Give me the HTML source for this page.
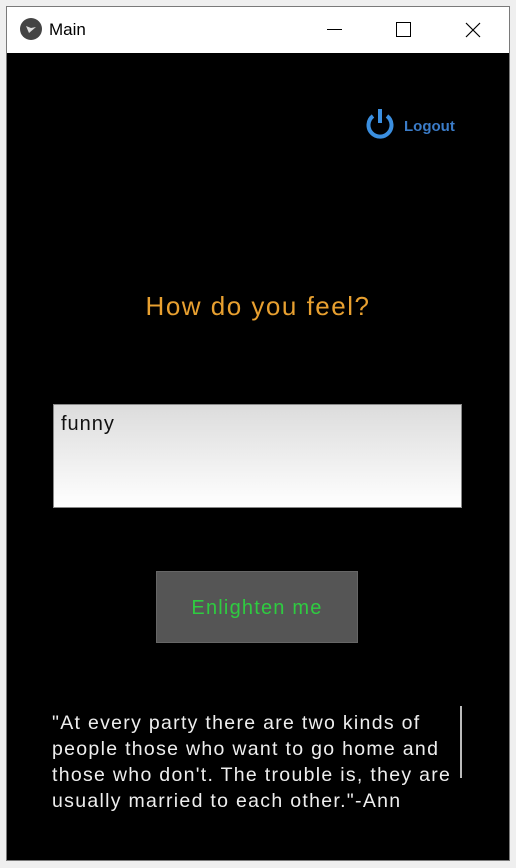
<!DOCTYPE html>
<html><head><style>
body{margin:0;width:516px;height:868px;background:#efefef;position:relative;overflow:hidden;font-family:"Liberation Sans",sans-serif}
.win{position:absolute;left:6px;top:6px;width:502px;height:853px;border:1px solid #7a7a7a;background:#fff}
.tb{position:absolute;left:0;top:0;width:502px;height:46px;background:#fff}
.content{position:absolute;left:0;top:46px;width:502px;height:807px;background:#000}
.abs{position:absolute}
</style></head><body>
<div class="win">
<div class="tb">
<svg class="abs" style="left:13px;top:11px" width="22" height="22"><circle cx="11" cy="11" r="11" fill="#444"/><path d="M6 8 L9 15 L16 9 L11 10 Z" fill="#ddd"/></svg>
<div class="abs" style="left:42px;top:13px;font-size:17px;color:#000">Main</div>
<div class="abs" style="left:320px;top:22px;width:15px;height:1px;background:#000"></div>
<div class="abs" style="left:389px;top:15px;width:13px;height:13px;border:1px solid #000"></div>
<svg class="abs" style="left:458px;top:15px" width="16" height="16"><path d="M1 1 L15 15 M15 1 L1 15" stroke="#000" stroke-width="1.2"/></svg>
</div>
<div class="content">
<svg class="abs" style="left:355px;top:52px" width="36" height="36"><path d="M11 11 A11.5 11.5 0 1 0 25 11" fill="none" stroke="#3b8fe0" stroke-width="4"/><path d="M18 4 L18 18" stroke="#3b8fe0" stroke-width="4"/></svg>
<div class="abs" style="left:397px;top:65px;font-size:15px;font-weight:bold;color:#3b7cc8">Logout</div>
<div class="abs" style="left:0;width:502px;top:238px;text-align:center;font-size:26px;letter-spacing:1.5px;color:#e8a030">How do you feel?</div>
<div class="abs" style="left:46px;top:351px;width:407px;height:102px;border:1px solid #888;background:linear-gradient(#dcdcdc,#fff)"></div>
<div class="abs" style="left:54px;top:360px;font-size:20px;letter-spacing:1px;color:#111">funny</div>
<div class="abs" style="left:149px;top:518px;width:202px;height:72px;background:#555;border:1px solid #666;box-sizing:border-box;color:#2ecc40;font-size:20px;letter-spacing:1.2px;text-align:center;line-height:72px">Enlighten me</div>
<div class="abs" style="left:45px;top:657px;width:420px;font-size:19.5px;letter-spacing:1.3px;line-height:26px;color:#eee;white-space:nowrap">"At every party there are two kinds of<br>people those who want to go home and<br>those who don't. The trouble is, they are<br>usually married to each other."-Ann</div>
<div class="abs" style="left:453px;top:653px;width:2px;height:72px;background:#bbb"></div>
</div>
</div>
</body></html>
